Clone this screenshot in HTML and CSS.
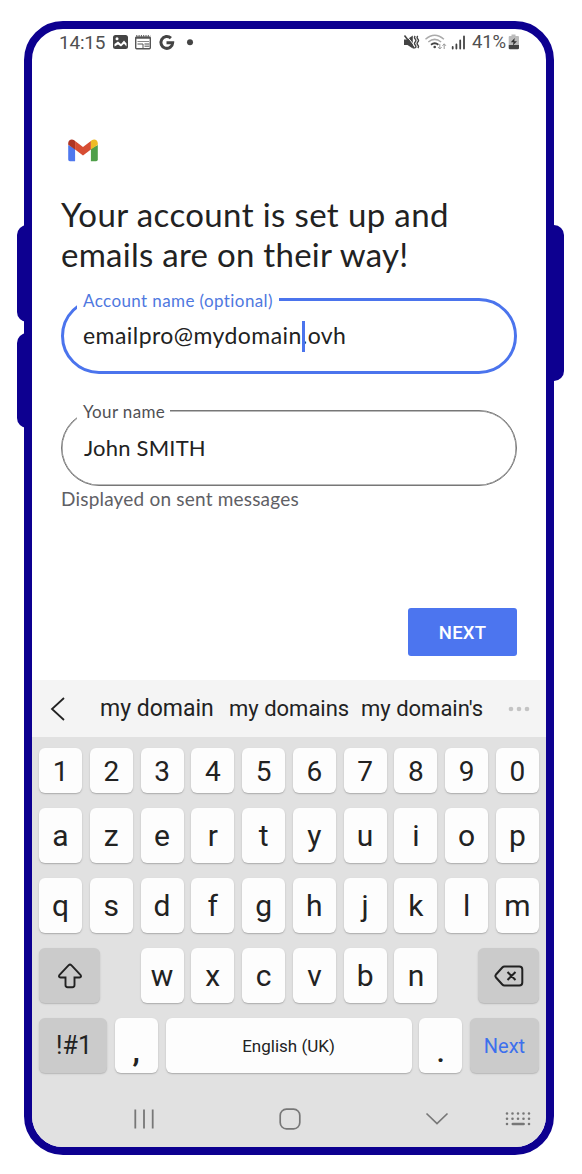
FILE: index.html
```html
<!DOCTYPE html>
<html lang="en">
<head>
<meta charset="utf-8">
<title>Account set up</title>
<link rel="stylesheet" href="styles.css">
</head>
<body>
<div class="device">
  <i class="side volume-up"></i><i class="side volume-down"></i><i class="side power"></i>
  <main class="screen">
    <header class="status">
      <span class="clock">14:15</span>
      <svg class="notices" width="84" height="18" viewBox="0 0 84 18">
        <rect x="1" y="2" width="15" height="14" rx="2.500" fill="#444"/>
        <circle cx="5" cy="5.800" r="1.500" fill="#fff"/>
        <path d="M2.500 13.500V11L6 8.500 9 11l3-3.500 2.500 3v3L12 10.800 9 13.500 6 11.500z" fill="#fff"/>
        <g fill="none" stroke="#555"><rect x="23.700" y="4.200" width="14.600" height="11.600" rx="1" stroke-width="1.400"/><path d="M23.500 4.800h15" stroke-width="2"/><path d="M24.300 2.900h14" stroke-width="1.600" stroke-dasharray="1 1.300"/><path d="M25.500 8.500H37" stroke="#888"/><path d="M25.500 11H31v5"/><path d="M32.500 11h5M32.500 13.300h5" stroke-width="1.500" stroke="#888"/></g>
        <path d="M58.900 5.200A5.900 5.900 0 1 0 60.700 9.700H54.500" fill="none" stroke="#444" stroke-width="3"/>
        <circle cx="78" cy="9.300" r="3" fill="#444"/>
      </svg>
      <svg class="signals" width="66" height="18" viewBox="0 0 66 18">
        <path d="M1 6.500h3L9.800 2.500v13L4.500 12H1z" fill="#444"/><path d="M2.800 1.800 12.300 13.700" stroke="#fff" stroke-width="1"/><path d="M1.500 2.500 11.500 15.500" stroke="#444" stroke-width="1.600"/>
        <path d="M12.200 3q-1.500 1.500 0 3t0 3 0 3 0 3M14.800 3q-1.500 1.500 0 3t0 3 0 3 0 3" fill="none" stroke="#444" stroke-width="1.300"/>
        <g fill="none" stroke-width="1.500"><path d="M22.500 6.300q9.200-8 18.400 0M25.300 9q6.400-5.300 12.800 0" stroke="#aaa"/><path d="M28 11.700q3.700-3 7.400 0" stroke="#444" stroke-width="1.800"/></g><circle cx="31.700" cy="14" r="1.300" fill="#444"/>
        <path d="M36.800 11v5M35 14l1.800 2 1.800-2M41.200 16v-5M39.500 12.800l1.700-2 1.700 2" fill="none" stroke="#999"/>
        <path d="M49.700 15.500V14M53.400 15.500v-4M57.200 15.500V7.500M61 15.500V3.500" stroke="#444" stroke-width="1.800" stroke-linecap="round"/>
      </svg>
      <span class="percent">41%</span>
      <svg class="battery" width="12" height="16" viewBox="0 0 12 16">
        <path d="M3.500 2V.5h4V2H10a1 1 0 0 1 1 1v8H.7V3a1 1 0 0 1 1-1z" fill="#bbb"/><path d="M.7 11H11v3a1.300 1.300 0 0 1-1.300 1.300H2A1.300 1.300 0 0 1 .7 14z" fill="#444"/><path d="M6.700 4 2.800 8.300h2.700L4.800 11.500l4.200-4.300H6.300z" fill="#333"/>
      </svg>
    </header>

    <section class="setup">
      <svg class="gmail" width="30" height="23" viewBox="0 0 30 23">
        <path d="M.2 6v14.600A1.700 1.700 0 0 0 1.900 22.300h5.200V9.500z" fill="#4f78ee"/>
        <path d="M22.900 9.500v12.800h5.200a1.700 1.700 0 0 0 1.700-1.700V6z" fill="#4f9f49"/>
        <path d="M7.100 2 15 8l7.900-6v8.500L15 16.500l-7.900-6z" fill="#d74d33"/>
        <path d="M.2 4.200C.2.900 3.700-.7 6.200 1.300l.9.700v8.500L.2 5.700z" fill="#ae3424"/>
        <path d="M29.800 4.200c0-3.300-3.500-4.900-6-2.900l-.9.700v8.500l6.900-4.800z" fill="#eebb27"/>
      </svg>
      <h1><span class="line-a">Your account is set up and</span><br><span class="line-b">emails are on their way!</span></h1>
      <div class="field focused">
        <span class="label">Account name (optional)</span>
        <span class="value">emailpro@mydomain<i class="caret"></i>.ovh</span>
      </div>
      <div class="field named">
        <span class="label">Your name</span>
        <span class="value">John SMITH</span>
      </div>
      <p class="hint">Displayed on sent messages</p>
      <button class="next">NEXT</button>
    </section>

    <div class="suggestions">
      <svg class="back" width="16" height="26" viewBox="0 0 16 26"><path d="M14 2 2 13l12 11" fill="none" stroke="#222" stroke-width="1.800"/></svg>
      <span class="s1">my domain</span><span class="s2">my domains</span><span class="s3">my domain's</span>
      <svg class="more" width="22" height="6" viewBox="0 0 22 6" fill="#c4c4c4"><circle cx="3" cy="3" r="2.300"/><circle cx="11" cy="3" r="2.300"/><circle cx="19" cy="3" r="2.300"/></svg>
    </div>

    <section class="keyboard">
      <div class="row digits"><b>1</b><b>2</b><b>3</b><b>4</b><b>5</b><b>6</b><b>7</b><b>8</b><b>9</b><b>0</b></div>
      <div class="row"><b>a</b><b>z</b><b>e</b><b>r</b><b>t</b><b>y</b><b>u</b><b>i</b><b>o</b><b>p</b></div>
      <div class="row"><b>q</b><b>s</b><b>d</b><b>f</b><b>g</b><b>h</b><b>j</b><b>k</b><b>l</b><b>m</b></div>
      <div class="row third">
        <b class="dark wide"><svg width="26" height="26" viewBox="0 0 26 26"><path d="M11.700 2.200Q13 1 14.300 2.200l9.100 9.600q1.600 2.400-1 2.700H17.500v7.600q0 2.200-2.200 2.200h-4.600q-2.200 0-2.200-2.200v-7.600H3.600q-2.600-.3-1-2.700z" fill="none" stroke="#222" stroke-width="1.900"/></svg></b>
        <div class="letters"><b>w</b><b>x</b><b>c</b><b>v</b><b>b</b><b>n</b></div>
        <b class="dark wide"><svg width="30" height="22" viewBox="0 0 30 22"><path d="M10.500 1.500h14.800q3 0 3 3v13q0 3-3 3H10.500q-1.300 0-2.200-1L2 12.500q-1.200-1.500 0-3l6.300-7q.9-1 2.200-1zM13.500 7l8 8M21.500 7l-8 8" fill="none" stroke="#222" stroke-width="2"/></svg></b>
      </div>
      <div class="row bottom"><b class="dark symbols">!#1</b><b class="mark comma">,</b><b class="space">English (UK)</b><b class="mark">.</b><b class="dark enter">Next</b></div>
    </section>

    <nav class="navbar">
      <svg class="recent" width="22" height="22" viewBox="0 0 22 22"><path d="M2.300 1.500v19M11 1.500v19M19.700 1.500v19" stroke="#777" stroke-width="1.800"/></svg>
      <svg class="home" width="22" height="22" viewBox="0 0 22 22"><rect x="1.200" y="1.200" width="19.600" height="19.600" rx="6.200" fill="none" stroke="#777" stroke-width="1.700"/></svg>
      <svg class="hide" width="24" height="14" viewBox="0 0 24 14"><path d="m1.500 1.500 10.500 10 10.500-10" fill="none" stroke="#777" stroke-width="1.700"/></svg>
      <svg class="layout" width="26" height="16" viewBox="0 0 26 16"><g fill="none" stroke="#777" stroke-width="2.600" stroke-linecap="round"><path d="M2 2.500h22.100M2 7.700h22.100" stroke-dasharray="0 5.500"/><path d="M2 13h0M7.800 13h10.800M24 13h0"/></g></svg>
    </nav>
  </main>
</div>
</body>
</html>
```
FILE: styles.css
```css
* { box-sizing: border-box; }
body { margin: 0; background: #fff; font-family: Roboto, sans-serif; color: #222; }
.device { position: relative; width: 530px; height: 1134px; margin: 21px 0 0 24px; }
.screen { position: relative; display: flex; flex-direction: column; height: 1134px; border: 8px solid #0d0090; border-radius: 39px; overflow: hidden; background: #fff; }
.side { position: absolute; background: #0d0090; width: 20px; }
.volume-up { left: -7px; top: 204px; height: 97px; border-radius: 10px 0 0 10px; }
.volume-down { left: -7px; top: 312px; height: 95px; border-radius: 10px 0 0 10px; }
.power { right: -10px; top: 204px; height: 156px; border-radius: 0 10px 10px 0; }

.status { display: flex; align-items: center; height: 26px; padding-left: 27px; color: #505050; font-size: 19px; }
.clock { width: 47px; letter-spacing: -.2px; }
.notices { margin-left: 6px; }
.signals { margin-left: auto; margin-right: 3px; }
.percent { width: 36px; font-size: 18.500px; letter-spacing: -.2px; }
.battery { margin-right: 26px; }

.setup { display: flex; flex-direction: column; height: 625px; padding: 84px 29px 0; font-family: Lato, sans-serif; font-variant-ligatures: none; }
.gmail { margin-left: 7px; display: block; }
h1 { margin: 32px 0 0; font-size: 33px; line-height: 40px; font-weight: 400; height: 80px; white-space: nowrap; }
.line-a { letter-spacing: .38px; }
.line-b { letter-spacing: .27px; }
.field { position: relative; flex: none; height: 76px; padding: 0 22px 2px 22px; border: 1px solid #777; border-radius: 38px; display: flex; align-items: center; font-size: 22px; }
.focused { margin-top: 24px; padding: 0 19px 2px; border: 3px solid #4b74ed; font-size: 23px; letter-spacing: .44px; }
.named { margin-top: 36px; letter-spacing: .2px; box-shadow: inset 0 0 0 .5px #777; }
.label { position: absolute; left: 15px; top: -9px; height: 20px; padding: 0 5px 0 6px; line-height: 20px; font-size: 17px; letter-spacing: .35px; background: #fff; color: #505055; white-space: nowrap; }
.focused .label { left: 13px; padding-right: 6px; color: #4f78e0; top: -10px; letter-spacing: .4px; }
.value { white-space: nowrap; }
.caret { position: relative; display: inline-block; width: 0; }
.caret::after { content: ""; position: absolute; left: 0; top: -23px; width: 3px; height: 31px; background: #4b74ed; }
.hint { margin: 2px 0 0; font-size: 19px; line-height: 22px; letter-spacing: .2px; color: #606065; white-space: nowrap; }
.next { align-self: flex-end; margin-top: 98px; width: 109px; height: 48px; padding-top: 3px; border: 0; border-radius: 3px; background: #4c75ef; color: #fff; font: 500 18.500px Roboto, sans-serif; letter-spacing: .2px; }

.suggestions { display: flex; align-items: center; height: 57px; background: #f4f4f4; font-size: 22px; padding-left: 18px; white-space: nowrap; }
.s1 { margin-left: 34px; width: 129px; font-size: 23px; }
.s2 { width: 132px; }
.s3 { width: 147px; }

.keyboard { height: 346px; background: #e1e1e1; padding: 11px 7px 0; }
.row { display: flex; justify-content: space-between; height: 55px; margin-bottom: 15px; }
.row b { display: flex; align-items: center; justify-content: center; width: 43px; height: 100%; border-radius: 6px; background: #fdfdfd; box-shadow: 0 1px 1.500px #aaa; font-weight: 400; font-size: 30px; }
.digits { height: 45px; }
.row.digits b { font-size: 28px; padding-top: 2px; }
.row .dark { background: #cbcbcb; box-shadow: 0 1px 1.500px #b5b5b5; }
.row .wide { width: 61px; }
.letters { display: flex; justify-content: space-between; width: 297px; }
.row .symbols { width: 68px; font-size: 25px; padding-left: 2px; }
.row .mark { padding-top: 12px; font-size: 30px; font-weight: 500; }
.row .comma { font-weight: 700; }
.row .space { width: 246px; font-size: 17px; }
.row .enter { width: 69px; font-size: 20px; color: #3d70ed; }

.navbar { flex: 1; display: flex; align-items: center; background: #e1e1e1; padding: 7px 15px 0 101px; }
.home { margin-left: 124px; }
.hide { margin-left: 124px; }
.layout { margin-left: auto; }
```
